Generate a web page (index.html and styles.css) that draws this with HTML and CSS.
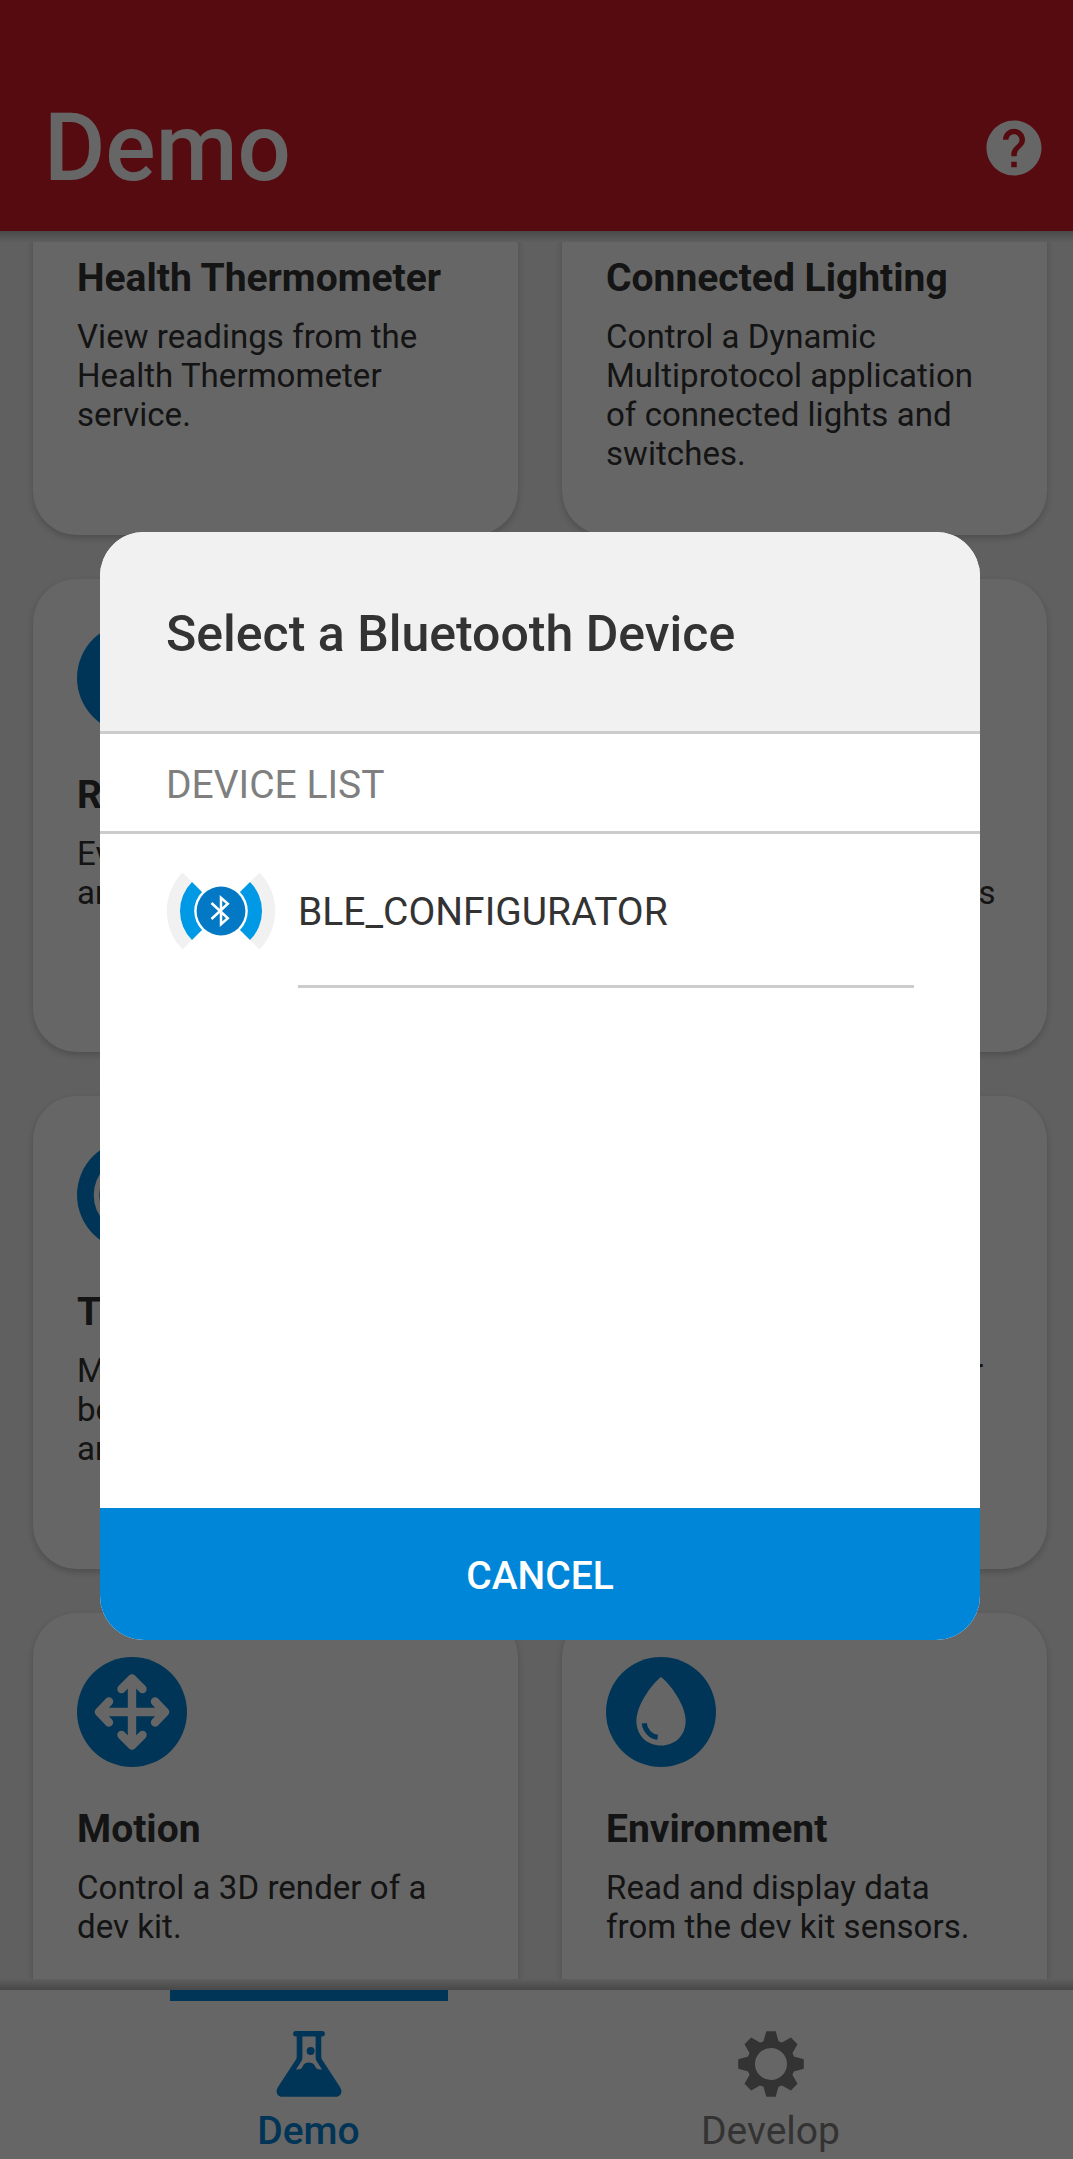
FILE: index.html
```html
<!DOCTYPE html>
<html lang="en">
<head>
<meta charset="utf-8">
<title>Demo</title>
<link rel="stylesheet" href="styles.css">
</head>
<body>
<div class="app">
  <header class="app-bar">
    <h1 class="app-title">Demo</h1>
    <svg class="help" viewBox="0 0 24 24"><path fill="#fff" d="M12 2C6.48 2 2 6.48 2 12s4.48 10 10 10 10-4.48 10-10S17.52 2 12 2zm1 17h-2v-2h2v2zm2.07-7.75l-.9.92C13.45 12.9 13 13.5 13 15h-2v-.5c0-1.1.45-2.1 1.17-2.83l1.24-1.26c.37-.36.59-.86.59-1.41 0-1.1-.9-2-2-2s-2 .9-2 2H8c0-2.21 1.79-4 4-4s4 1.79 4 4c0 .88-.36 1.68-.93 2.25z"/></svg>
  </header>

  <main class="content">
    <div class="grid">
      <section class="card">
        <svg class="card-icon" viewBox="-55 -55 110 110"><circle class="disc" r="55"/></svg>
        <h2 class="card-title">Health Thermometer</h2>
        <p class="card-text">View readings from the<br>Health Thermometer<br>service.</p>
      </section>
      <section class="card">
        <svg class="card-icon" viewBox="-55 -55 110 110"><circle class="disc" r="55"/></svg>
        <h2 class="card-title">Connected Lighting</h2>
        <p class="card-text">Control a Dynamic<br>Multiprotocol application<br>of connected lights and<br>switches.</p>
      </section>
      <section class="card">
        <svg class="card-icon" viewBox="-55 -55 110 110"><circle class="disc" r="55"/></svg>
        <h2 class="card-title">Range Test</h2>
        <p class="card-text">Evaluate the link budget<br>and sensitivity.</p>
      </section>
      <section class="card">
        <svg class="card-icon" viewBox="-55 -55 110 110"><circle class="disc" r="55"/></svg>
        <h2 class="card-title">Blinky</h2>
        <p class="card-text">Control an LED and<br>receive button press alerts</p>
      </section>
      <section class="card">
        <svg class="card-icon" viewBox="-55 -55 110 110"><circle class="disc" r="55"/><circle class="ring" r="35.5"/></svg>
        <h2 class="card-title">Throughput</h2>
        <p class="card-text">Measure throughput<br>between a mobile device<br>and a dev kit.</p>
      </section>
      <section class="card">
        <svg class="card-icon" viewBox="-55 -55 110 110"><circle class="disc" r="55"/></svg>
        <h2 class="card-title">Pairing</h2>
        <p class="card-text">Connect two devices over<br>Bluetooth.</p>
      </section>
      <section class="card">
        <svg class="card-icon" viewBox="-55 -55 110 110">
          <circle class="disc" r="55"/>
          <path class="arrows" d="M-32 0H32M0-33V33M-10.5-23L0-33.5 10.5-23M-10.5 23L0 33.5 10.5 23M-23-10.5L-33 0-23 10.5M23-10.5L33 0 23 10.5"/>
        </svg>
        <h2 class="card-title">Motion</h2>
        <p class="card-text">Control a 3D render of a<br>dev kit.</p>
      </section>
      <section class="card">
        <svg class="card-icon" viewBox="-55 -55 110 110">
          <circle class="disc" r="55"/>
          <path fill="#fff" d="M0-35C8-29 24.6-8 24.6 9 24.6 24 13.5 33.5 0 33.5S-24.6 24-24.6 9C-24.6-8-8-29 0-35Z"/>
          <path class="shine" d="M-16.8 11.3C-16 18.5-10.5 24.5-3.3 25.3"/>
        </svg>
        <h2 class="card-title">Environment</h2>
        <p class="card-text">Read and display data<br>from the dev kit sensors.</p>
      </section>
    </div>
  </main>

  <nav class="tabs">
    <div class="tab active">
      <svg class="tab-icon" viewBox="-33 -33 66 66">
        <path fill-rule="evenodd" d="M-13.2-33H13.2A2.7 2.7 0 0 1 13.2-27.6H12.3V-7Q12.3-5.5 13.2-4.2L31.3 23.5C34 28 31.5 32.8 27 32.8H-27C-31.5 32.8-34 28-31.3 23.5L-13.2-4.2Q-12.3-5.5-12.3-7V-27.6H-13.2A2.7 2.7 0 0 1-13.2-33ZM-6.6-27.6V-6Q-6.6-4.5-7.4-3.2L-13 5.5Q-7.5 6.2-6.4 2.6C-4.8-3 4.6-3 6.2 2.6Q7.5 6.2 13 5.5L7.4-3.2Q6.6-4.5 6.6-6V-27.6Z"/>
        <circle cx="1.6" cy="-13" r="4"/>
      </svg>
      <span class="tab-label">Demo</span>
    </div>
    <div class="tab">
      <svg class="tab-icon" viewBox="-33 -33 66 66">
        <circle class="gear-ring" r="20"/>
        <path id="teeth" d="M-8-21L-4.7-32.8H4.7L8-21ZM-8 21L-4.7 32.8H4.7L8 21ZM-21-8L-32.8-4.7V4.7L-21 8ZM21-8L32.8-4.7V4.7L21 8Z"/>
        <use href="#teeth" transform="rotate(45)"/>
      </svg>
      <span class="tab-label">Develop</span>
    </div>
  </nav>

  <div class="scrim">
    <div class="dialog">
      <div class="dialog-head">Select a Bluetooth Device</div>
      <div class="list-head">DEVICE LIST</div>
      <div class="device">
        <svg class="device-icon" viewBox="-55 -55 110 110">
          <path fill="#f1f1f1" d="M0 0L-38.5-38.5A55 55 0 0 0-38.5 38.5ZM0 0L38.5-38.5A55 55 0 0 1 38.5 38.5Z"/>
          <path fill="#0099e6" d="M0 0L-29-29A41 41 0 0 0-29 29ZM0 0L29-29A41 41 0 0 1 29 29Z"/>
          <circle r="26.8" fill="#fff"/>
          <circle r="24.4" fill="#0378c4"/>
          <path fill="none" stroke="#fff" stroke-width="2.5" d="M-9.5-8L6.8 7.3 0 13.3V-13.3L6.8-7.3-9.5 8"/>
        </svg>
        <div class="device-name">BLE_CONFIGURATOR</div>
      </div>
      <div class="dialog-space"></div>
      <div class="cancel">CANCEL</div>
    </div>
  </div>
</div>
</body>
</html>
```
FILE: styles.css
```css
* { box-sizing: border-box; }

html, body {
  margin: 0;
  height: 2159px;
  overflow: hidden;
}

body { font-family: Roboto, sans-serif; color: #333; }

.app {
  position: relative;
  display: flex;
  flex-direction: column;
  width: 1080px;
  height: 2159px;
  background: #f0f0f0;
}

.app-bar {
  display: flex;
  align-items: center;
  justify-content: space-between;
  height: 231px;
  padding: 65px 33px 0 44px;
  background: #d71c28;
}

.app-title {
  margin: 0;
  font-size: 94px;
  line-height: 110px;
  font-weight: 500;
  color: #fff;
}

.help { width: 66px; height: 66px; }

.content {
  position: relative;
  flex: 1;
  min-height: 0;
  overflow: hidden;
}

/* Elevation shadows cast by the app bar and the tab bar */
.content::before,
.content::after {
  content: "";
  position: absolute;
  left: 0;
  right: 0;
  height: 11px;
}

.content::before { top: 0; background: linear-gradient(#b8b8b8, #ececec); }
.content::after { bottom: 0; background: linear-gradient(#ececec, #b4b4b4); }

.grid {
  display: grid;
  grid-template-columns: 1fr 1fr;
  grid-auto-rows: 473px;
  gap: 44px;
  margin-top: -169px;
  padding: 0 33px;
}

.card {
  padding: 44px;
  border-radius: 44px;
  background: #fff;
  box-shadow: 0 3px 7px rgba(0, 0, 0, 0.2);
}

.card-icon { display: block; width: 110px; height: 110px; }
.disc { fill: #0086d9; }
.ring { fill: none; stroke: #fff; stroke-width: 5.5; }
.arrows { fill: none; stroke: #fff; stroke-width: 8.4; stroke-linecap: round; stroke-linejoin: round; }
.shine { fill: none; stroke: #0086d9; stroke-width: 5; }

.card-title {
  margin: 39px 0 16px;
  font-size: 39px;
  line-height: 46px;
  font-weight: 700;
  white-space: nowrap;
}

.card-text {
  margin: 0;
  font-size: 33px;
  line-height: 39px;
  letter-spacing: 0.05px;
  white-space: nowrap;
}

.tabs {
  display: flex;
  justify-content: center;
  height: 169px;
  padding-right: 1px;
  background: #fff;
}

.tab {
  position: relative;
  display: flex;
  flex-direction: column;
  align-items: center;
  width: 462px;
  padding-top: 41px;
  color: #7f7f7f;
}

.tab.active { color: #0086d9; font-weight: 500; }

.tab.active::before {
  content: "";
  position: absolute;
  top: 0;
  width: 278px;
  height: 11px;
  background: #0086d9;
}

.tab-icon { width: 66px; height: 66px; fill: currentColor; }
.gear-ring { fill: none; stroke: currentColor; stroke-width: 8; }
.tab-label { margin-top: 11px; font-size: 39px; line-height: 46px; }

.scrim {
  position: absolute;
  inset: 0;
  padding: 532px 100px 0;
  background: rgba(0, 0, 0, 0.6);
}

.dialog {
  display: flex;
  flex-direction: column;
  height: 1108px;
  border-radius: 44px;
  overflow: hidden;
  background: #fff;
}

.dialog-head {
  height: 202px;
  padding-left: 66px;
  border-bottom: 3px solid #ccc;
  background: #f1f1f1;
  font-size: 50px;
  line-height: 204px;
  font-weight: 500;
}

.list-head {
  height: 100px;
  padding-left: 66px;
  border-bottom: 3px solid #ccc;
  font-size: 39px;
  line-height: 103px;
  color: #7f7f7f;
}

.device {
  display: flex;
  height: 154px;
  gap: 22px;
  padding: 0 66px;
}

.device-icon { width: 110px; height: 110px; margin-top: 22px; }

.device-name {
  flex: 1;
  border-bottom: 3px solid #ccc;
  font-size: 39px;
  line-height: 156px;
}

.dialog-space { flex: 1; }

.cancel {
  height: 132px;
  background: #0086d9;
  color: #fff;
  font-size: 39px;
  line-height: 136px;
  font-weight: 500;
  text-align: center;
}
```
